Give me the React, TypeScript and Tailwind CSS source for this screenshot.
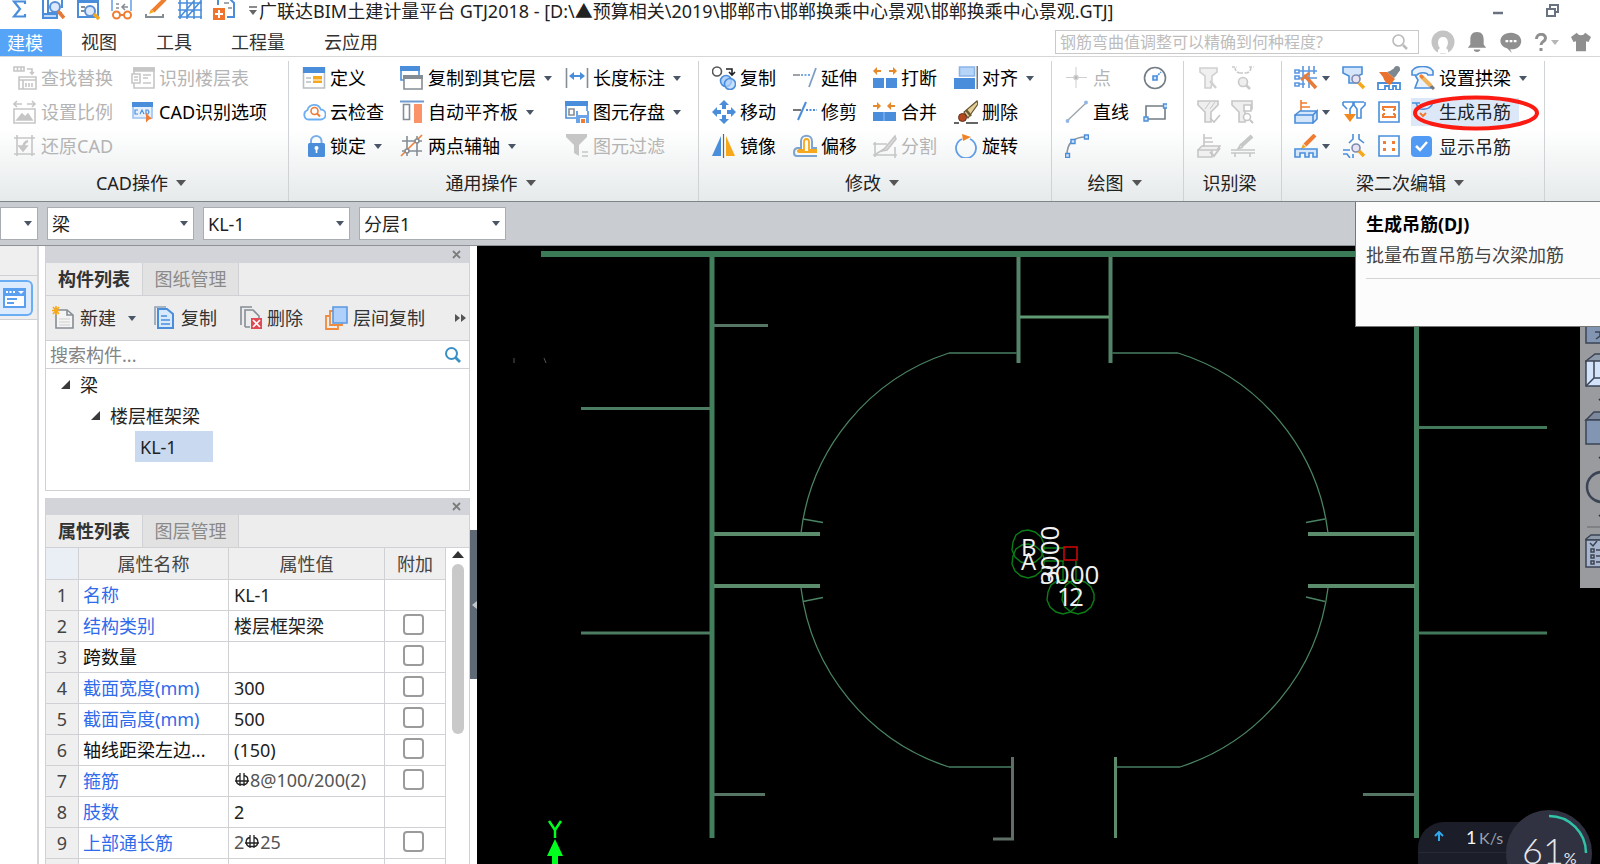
import type { ReactNode } from 'react'

const BLUE = '#4a8edb'
const SKY = '#b3d4fb'
const ORANGE = '#f07c33'
const AMBER = '#f6a81c'
const GRAY = '#858d94'
const OFF = '#c6c6c6'
const WALL = '#4a8462'

// ---------- icons ----------

function Svg({ children, className = 'h-6 w-6' }: { children: ReactNode; className?: string }) {
  return (
    <svg viewBox="0 0 24 24" fill="none" strokeWidth="1.6" className={`shrink-0 ${className}`} aria-hidden="true">
      {children}
    </svg>
  )
}

function Caret({ className = 'text-gray-600' }: { className?: string }) {
  return (
    <svg viewBox="0 0 8 5" className={`h-[5px] w-2 shrink-0 ${className}`} aria-hidden="true">
      <path d="M0 0h8L4 5z" fill="currentColor" />
    </svg>
  )
}

const icons: Record<string, ReactNode> = {
  findReplace: (
    <g stroke={OFF}>
      <path d="M1 1h10v4H1zM4.500 1v4M8 1v4M14 3h5v5M17 6l2 2 2-2M6 11h17v12H6zM6 14h17M10 14v9M13 17v4M16 17v4M19 17v4" />
    </g>
  ),
  scale: (
    <g stroke={OFF}>
      <path d="M1 4h8M4 1L1 4l3 3M14 4h8M19 1l3 3-3 3M1 9h21v14H1z" />
      <path d="M4 20l5-6 3 3 3-3 4 6z" fill={OFF} />
    </g>
  ),
  restore: (
    <g stroke={OFF}>
      <path d="M4 1v21M1 4h21M1 20h21M19 1v21" />
      <path d="M15 7c-4 1-5 4-5 9" strokeWidth="2.500" />
      <path d="M6 12l4 5 4-5z" fill={OFF} />
    </g>
  ),
  floorTable: (
    <g stroke={OFF}>
      <path d="M3 2h20v20H3z" />
      <path d="M3 2h20v3H3z" fill={OFF} />
      <path d="M1 8h8v9H1z" fill="#fff" />
      <path d="M3 11h4M3 14h4M12 9h8M12 12h5M12 17h8" />
    </g>
  ),
  cadOption: (
    <g>
      <path d="M2 3h19v15H2z" fill="#e6f0fc" stroke="#9cc2f0" />
      <path d="M1 2h21v5H1z" fill={BLUE} />
      <path d="M7 10H4v4h3M9 14l2-4 2 4M15 10v4h2l1-2-1-2z" stroke={BLUE} strokeWidth="1.200" />
      <path d="M15 13l6 6-3 .5-3 3z" fill={ORANGE} />
    </g>
  ),
  define: (
    <g>
      <path d="M1.500 2h21v20h-21z" fill="#fff" stroke="#b9bec3" />
      <path d="M1 1h22v6H1z" fill={BLUE} />
      <path d="M4 12h5M4 16h5" stroke="#b9bec3" />
      <path d="M11 10h9v7h-9z" fill={AMBER} />
      <path d="M11 14h9" stroke="#fff" strokeWidth="1" />
    </g>
  ),
  cloud: (
    <g>
      <path d="M6 19.500a5 5 0 0 1-.5-9.500 7 7 0 0 1 13.300-.5A5 5 0 0 1 18.500 19.500z" stroke="#6daef2" strokeWidth="1.800" />
      <circle cx="12.500" cy="11" r="3.500" stroke={ORANGE} />
      <path d="M15 13.500l3 3" stroke={ORANGE} strokeWidth="2" />
    </g>
  ),
  lock: (
    <g>
      <path d="M9 11V6.500a5.300 5.300 0 0 1 10.500 0V11" stroke="#7aaeea" strokeWidth="2" />
      <rect x="6" y="9" width="17" height="14" rx="1.500" fill={BLUE} />
      <circle cx="14.500" cy="14" r="2" fill="#fff" />
      <path d="M14.500 14v5" stroke="#fff" />
    </g>
  ),
  copyFloor: (
    <g>
      <path d="M1 1h18v13H1z" fill="#fff" stroke={BLUE} />
      <path d="M0 0h20v5H0z" fill={BLUE} />
      <path d="M4 10h18v13H4z" fill="#fff" stroke={GRAY} />
      <path d="M3 9h20v4H3z" fill={GRAY} />
    </g>
  ),
  alignSlab: (
    <g>
      <path d="M0 1.500h24" stroke="#6f9bd1" strokeWidth="2" />
      <path d="M3.500 4.500h6v15h-6z" stroke={GRAY} />
      <path d="M14 4h8v19h-8z" fill="#fa9468" />
    </g>
  ),
  axis: (
    <g stroke={GRAY}>
      <path d="M7 2v20M17 2v20M2 7h20M2 17h20" />
      <path d="M1 22L22 1" stroke={ORANGE} />
      <circle cx="17" cy="7" r="2" fill="#fff" />
      <circle cx="7" cy="17" r="2" fill="#fff" />
    </g>
  ),
  dimension: (
    <g>
      <path d="M1.500 2v20M22.500 2v20" stroke={GRAY} />
      <path d="M5 10h14" stroke={BLUE} strokeWidth="2" />
      <path d="M4 10l5-4v8zM20 10l-5-4v8z" fill={BLUE} />
    </g>
  ),
  saveElement: (
    <g>
      <path d="M1 2h21v16H1z" fill="#fff" stroke={BLUE} />
      <path d="M0 1h23v5H0z" fill={BLUE} />
      <path d="M4 9h5v6H4z" stroke={GRAY} />
      <path d="M11 11h13v12H11z" fill="#6ba5e8" />
      <path d="M13 11h9v4h-9z" fill="#fff" />
      <path d="M15 18h6v5h-6z" fill="#fff" />
      <path d="M16 19h4v4h-4z" fill={ORANGE} />
    </g>
  ),
  filter: (
    <g>
      <path d="M1 0h21v3l-8 8v11l-5-3v-8L1 3z" fill={OFF} />
      <path d="M17 18h6M17 22h6" stroke={OFF} />
    </g>
  ),
  copy: (
    <g>
      <circle cx="5" cy="5.500" r="4.500" stroke="#555" />
      <path d="M14 3h6v5M17 6l3 3 3-3" stroke="#222" />
      <circle cx="14" cy="15" r="5.500" fill={SKY} stroke={BLUE} />
      <circle cx="18" cy="18" r="5.500" fill={SKY} fillOpacity=".7" stroke={BLUE} />
    </g>
  ),
  move: (
    <g fill={BLUE}>
      <path d="M12 0l5 5h-3v4h-4V5H7zM12 24l-5-5h3v-4h4v4h3zM0 12l5-5v3h4v4H5v3zM24 12l-5 5v-3h-4v-4h4V7z" />
    </g>
  ),
  mirror: (
    <g>
      <path d="M9 2v20H0z" fill={BLUE} />
      <path d="M14 2v20h9z" fill={AMBER} />
      <path d="M11.500 0v24" stroke="#666" strokeWidth="1.200" />
    </g>
  ),
  extend: (
    <g>
      <path d="M0 9h7" stroke={GRAY} />
      <path d="M8 9h9" stroke={BLUE} strokeDasharray="2 1.500" />
      <path d="M23 2l-7 19" stroke="#7f9fc4" strokeWidth="1.800" />
    </g>
  ),
  trim: (
    <g>
      <path d="M0 10h8" stroke="#555" />
      <path d="M13 10h11" stroke={BLUE} strokeDasharray="2 1.500" strokeWidth="2" />
      <path d="M13 2L5 20" stroke={BLUE} strokeWidth="2" />
    </g>
  ),
  offset: (
    <g>
      <path d="M24 22H4c-4 0-4-7 0-8h4V7c0-7 11-7 11 0v7h5" stroke="#7da3cf" strokeWidth="2" />
      <path d="M24 18H6c-2 0-1-2 0-2h5V8c0-4 5-4 5 0v8h8" stroke={AMBER} strokeWidth="1.800" />
    </g>
  ),
  breakIt: (
    <g>
      <path d="M0 12h11v10H0zM13 12h11v10H13z" fill={BLUE} />
      <path d="M3 5h5M16 5h5" stroke="#e58a2c" strokeWidth="2" />
      <path d="M0 5l4-4v8zM24 5l-4-4v8z" fill="#e58a2c" />
    </g>
  ),
  merge: (
    <g>
      <path d="M0 12h23v9H0z" fill={BLUE} />
      <path d="M11 12v9" stroke="#76acec" />
      <path d="M0 6h5M17 6h5" stroke="#e58a2c" strokeWidth="2" />
      <path d="M8 6L4 2v8zM14 6l4-4v8z" fill="#e58a2c" />
    </g>
  ),
  split: (
    <g stroke={OFF}>
      <path d="M2 8v15M0 10h14M0 21h24M22 13v11M3 20l8-5" />
      <path d="M22 2L12 14l-3 3 5-1 9-11z" fill="#ddd" />
    </g>
  ),
  align: (
    <g>
      <path d="M5.500 1h15v9h-15z" fill="#b6d4f7" stroke="#8ab4e8" />
      <path d="M0 12h21v11H0z" fill={BLUE} />
      <path d="M23.200 0v23" stroke="#555" strokeWidth="1.200" />
    </g>
  ),
  erase: (
    <g>
      <path d="M23 1L10 12l4 6L24 4z" fill="#e6cf94" stroke="#5f5232" strokeWidth="1.200" />
      <path d="M12 10l5 6" stroke="#6c5a32" strokeWidth="2.500" />
      <circle cx="8.500" cy="17.500" r="4" fill="#b6481f" stroke="#5f3222" strokeWidth="1" />
      <path d="M0 23h5M12 23h12" stroke="#333" strokeWidth="1.400" />
    </g>
  ),
  rotate: (
    <g>
      <path d="M8 5a10 10 0 1 0 8 0" stroke="#5f9de4" strokeWidth="1.800" />
      <path d="M8 0l9 3-8 4z" fill="#ef8324" />
    </g>
  ),
  point: (
    <g stroke="#cfcfcf">
      <path d="M11 1v21M1 11.500h21" strokeWidth="1" />
      <circle cx="11" cy="11.500" r="2" fill="#b5b5b5" />
    </g>
  ),
  line: (
    <g>
      <path d="M2 21L21 3" stroke="#9aa2aa" strokeWidth="1.300" />
      <circle cx="2.500" cy="21" r="1.900" fill="#8fb6e6" />
      <circle cx="21" cy="2.500" r="1.900" fill="#8fb6e6" />
    </g>
  ),
  arc: (
    <g>
      <path d="M2 21C2 10 8 3 21 3" stroke="#8b949c" strokeWidth="1.500" />
      <path d="M.5 19.500h4v4h-4zM6 5.500h4v4H6zM19.500 1h4v4h-4z" fill="#cfe2fa" stroke={BLUE} strokeWidth="1.400" />
    </g>
  ),
  circle: (
    <g>
      <circle cx="12" cy="12" r="10.500" stroke="#737d86" />
      <path d="M13 11l5-5" stroke={BLUE} strokeDasharray="2 1" />
      <path d="M10 10h4v4h-4z" fill="#cfe2fa" stroke={BLUE} />
    </g>
  ),
  rect: (
    <g>
      <path d="M3 6h19v13H3z" stroke="#737d86" />
      <path d="M1 17h4v4H1zM20.500 4h4v4h-4z" fill="#cfe2fa" stroke={BLUE} strokeWidth="1.400" />
    </g>
  ),
  beamPick: (
    <g stroke="#d0d0d0">
      <path d="M3 2h17v4l-5 4v6l-1 6H8V10L3 6z" fill="#f0f0f0" />
      <path d="M13 15l6 7" strokeWidth="2.500" />
    </g>
  ),
  beamZoom: (
    <g stroke="#c9c9c9">
      <path d="M1 1h5M18 1h5M4 2c1 4 3 5 5 5M20 2c-1 4-3 5-5 5M9 7h6" strokeDasharray="3 1.500" />
      <circle cx="12" cy="16" r="4.500" fill="#efefef" />
      <path d="M15 19l4 4" strokeWidth="2.500" />
    </g>
  ),
  beamFilter: (
    <g stroke={OFF}>
      <path d="M1 1h20v4l-7 7v10H8V12L1 5z" fill="#efefef" />
      <path d="M8 9l5-7M13 9l5-7" strokeWidth="1" />
      <path d="M13 18l4 4 6-7" />
    </g>
  ),
  beamFilter2: (
    <g stroke={OFF}>
      <path d="M1 1h20v8h-7v13H8V12L1 5z" fill="#efefef" />
      <path d="M13 5h7v6h-7z" fill="#fff" />
      <circle cx="16" cy="17" r="3.500" fill="#fff" />
      <path d="M19 20l3 3" strokeWidth="2" />
    </g>
  ),
  beamOk: (
    <g stroke={OFF}>
      <path d="M7 0v13M7 4h8M7 8h9M1 16l4-4h18l-3 4zM1 16h14v7H1z" fill="#f0f0f0" />
      <path d="M13 18l4 4 6-8" strokeWidth="2" />
    </g>
  ),
  beamPen: (
    <g stroke={OFF}>
      <path d="M21 2L10 12" strokeWidth="4" />
      <path d="M10 10l-3 5 5-2" />
      <path d="M0 16h24M0 19h24M4 19v4M19 19v4" />
    </g>
  ),
  gridPaint: (
    <g stroke="#5a97e2">
      <path d="M1 4h4v3H1zM1 10h4v3H1zM1 17h4v3H1zM9 0v22M15 0v22M20 0v8M5 5h18M5 12h18M5 18h6" />
      <path d="M12 11l10 11" stroke="#e77b3a" strokeWidth="3.500" />
      <path d="M7 14l8-7M10 9l5 5" stroke="#e77b3a" strokeWidth="2.500" />
    </g>
  ),
  inPlace: (
    <g>
      <path d="M7 0v12M7 3h6M7 7h9" stroke={ORANGE} />
      <path d="M1 15l5-4h17l-4 4zM1 15h18v8H1zM19 15l4-4v8l-4 4z" fill="#d5e6fb" stroke={BLUE} />
    </g>
  ),
  sketch: (
    <g>
      <path d="M21 1L11 11" stroke={ORANGE} strokeWidth="4" />
      <path d="M9 10l-2 5 5-2z" fill={AMBER} />
      <path d="M1 15h22v8h-4v-4h-4v4h-4v-4H6v4H1z" fill="#d5e6fb" stroke={BLUE} />
    </g>
  ),
  spanView: (
    <g>
      <path d="M1 1h19v7l-4 2v7H7v-7L1 7z" fill="#d5e6fb" stroke={BLUE} />
      <circle cx="14" cy="13" r="4" fill="#e7e3f3" stroke="#7d8bb0" />
      <path d="M17 17l5 5" stroke={AMBER} strokeWidth="3.500" />
    </g>
  ),
  spanDown: (
    <g>
      <path d="M1 2h10v3l-3 4v6M22 2H12v3l3 4v9h4V9l4-4V2M1 2v3l4 4" stroke={BLUE} />
      <path d="M2 14h12l-6 8z" fill="#f28a1d" />
    </g>
  ),
  spanCross: (
    <g stroke={BLUE}>
      <path d="M11 0v5l-4 4M17 0v5l5 4M1 16h7M1 20h4l3 4M11 20v4" />
      <circle cx="14" cy="14" r="4" fill="#e7e3f3" stroke="#7d8bb0" />
      <path d="M17 17l5 5" stroke={AMBER} strokeWidth="3.500" />
    </g>
  ),
  brush: (
    <g>
      <path d="M1 24v-7h22v7h-4v-4h-3v4h-4v-4H8v4z" fill="#fff" stroke={BLUE} strokeWidth="1.800" />
      <path d="M19 1l4 3-4 6-2 2-7-6 3-1z" fill="#7d8790" />
      <circle cx="20" cy="3" r="3" fill="#7d8790" />
      <path d="M2 6l8 0 8 7-5 6c-3-1-6-4-7-8z" fill="#e9722e" />
    </g>
  ),
  stirrup: (
    <g>
      <path d="M2 2h20v20H2z" stroke={BLUE} />
      <path d="M6 10V7h12v3M6 14v3h12v-3M8 10h-2M18 10h-2M8 14h-2M18 14h-2" stroke="#ef7d35" strokeWidth="2" />
    </g>
  ),
  dots: (
    <g>
      <path d="M2 2h20v20H2z" fill="#fff" stroke={BLUE} />
      <path d="M6 7h3v3H6zM15 7h3v3h-3zM6 14h3v3H6zM15 14h3v3h-3z" fill="#ef7d35" />
    </g>
  ),
  archBeam: (
    <g>
      <path d="M1 5c4-6 17-6 21 0v4h-5c-1-3-9-3-11 0H1zM4 9l3 5-3 8h16l-3-6" fill="#eaf2fd" stroke={BLUE} />
      <path d="M10 10l10 10" stroke="#f0b45e" strokeWidth="4" />
      <path d="M9 9l3 3" stroke="#ef7d35" strokeWidth="3" />
      <path d="M20 20l3 3" stroke="#777" strokeWidth="3" />
    </g>
  ),
  hanger: (
    <g stroke={BLUE}>
      <path d="M1 3h8M18 3h6M5 3c2 6 4 7 9 6 4 0 6-2 8-6" />
      <path d="M9 13l3 3 3-3" stroke={ORANGE} strokeWidth="2" />
    </g>
  ),
}

// ---------- ribbon ----------

interface Tool {
  icon: keyof typeof icons
  name: string
  text?: string
  caret?: boolean
  disabled?: boolean
}

interface Column {
  width: string
  tools: Tool[]
}

interface Group {
  label: string
  caret: boolean
  width: string
  columns: Column[]
}

const t = (icon: string, name: string, opts: Partial<Tool> = {}): Tool => ({ icon, name, text: name, ...opts })
const only = (icon: string, name: string, opts: Partial<Tool> = {}): Tool => ({ icon, name, ...opts })

const groups: Group[] = [
  {
    label: 'CAD操作',
    caret: true,
    width: 'w-[289px]',
    columns: [
      {
        width: 'w-[118px]',
        tools: [
          t('findReplace', '查找替换', { disabled: true }),
          t('scale', '设置比例', { disabled: true }),
          t('restore', '还原CAD', { disabled: true }),
        ],
      },
      { width: 'w-[140px]', tools: [t('floorTable', '识别楼层表', { disabled: true }), t('cadOption', 'CAD识别选项')] },
    ],
  },
  {
    label: '通用操作',
    caret: true,
    width: 'w-[410px]',
    columns: [
      { width: 'w-[98px]', tools: [t('define', '定义'), t('cloud', '云检查'), t('lock', '锁定', { caret: true })] },
      {
        width: 'w-[165px]',
        tools: [
          t('copyFloor', '复制到其它层', { caret: true }),
          t('alignSlab', '自动平齐板', { caret: true }),
          t('axis', '两点辅轴', { caret: true }),
        ],
      },
      {
        width: 'w-[118px]',
        tools: [
          t('dimension', '长度标注', { caret: true }),
          t('saveElement', '图元存盘', { caret: true }),
          t('filter', '图元过滤', { disabled: true }),
        ],
      },
    ],
  },
  {
    label: '修改',
    caret: true,
    width: 'w-[353px]',
    columns: [
      { width: 'w-[81px]', tools: [t('copy', '复制'), t('move', '移动'), t('mirror', '镜像')] },
      { width: 'w-[80px]', tools: [t('extend', '延伸'), t('trim', '修剪'), t('offset', '偏移')] },
      { width: 'w-[81px]', tools: [t('breakIt', '打断'), t('merge', '合并'), t('split', '分割', { disabled: true })] },
      { width: 'w-[90px]', tools: [t('align', '对齐', { caret: true }), t('erase', '删除'), t('rotate', '旋转')] },
    ],
  },
  {
    label: '绘图',
    caret: true,
    width: 'w-[132px]',
    columns: [
      { width: 'w-[78px]', tools: [t('point', '点', { disabled: true }), t('line', '直线'), only('arc', '弧线')] },
      { width: 'w-6', tools: [only('circle', '圆'), only('rect', '矩形')] },
    ],
  },
  {
    label: '识别梁',
    caret: false,
    width: 'w-[98px]',
    columns: [
      { width: 'w-[34px]', tools: [only('beamPick', '识别梁'), only('beamFilter', '校核梁'), only('beamOk', '原位标注校核')] },
      { width: 'w-6', tools: [only('beamZoom', '查改支座'), only('beamFilter2', '编辑支座'), only('beamPen', '识别原位标注')] },
    ],
  },
]

function ToolButton({ tool }: { tool: Tool }) {
  return (
    <button
      type="button"
      aria-label={tool.name}
      disabled={tool.disabled}
      className="flex h-[34px] items-center gap-1 whitespace-nowrap text-black disabled:text-[#b4b4b4]"
    >
      <Svg>{icons[tool.icon]}</Svg>
      {tool.text && <span>{tool.text}</span>}
      {tool.caret && <Caret className={tool.text ? 'ml-1 text-gray-600' : 'text-gray-600'} />}
    </button>
  )
}

function GroupLabel({ label, caret }: { label: string; caret: boolean }) {
  return (
    <div className="flex h-9 items-center justify-center gap-2 pr-1.5">
      <span>{label}</span>
      {caret && (
        <svg viewBox="0 0 10 6" className="h-1.5 w-2.5" aria-hidden="true">
          <path d="M0 0h10L5 6z" fill="#555" />
        </svg>
      )}
    </div>
  )
}

function RibbonGroup({ group }: { group: Group }) {
  return (
    <div className={`shrink-0 border-r border-[#cfd3d6] ${group.width}`}>
      <div className="flex h-[104px] pl-[13px]">
        {group.columns.map((col, i) => (
          <div key={i} className={`shrink-0 ${col.width}`}>
            {col.tools.map((tool) => (
              <ToolButton key={tool.name} tool={tool} />
            ))}
          </div>
        ))}
      </div>
      <GroupLabel label={group.label} caret={group.caret} />
    </div>
  )
}

function BeamEditGroup() {
  return (
    <div className="w-[263px] shrink-0 border-r border-[#cfd3d6]">
      <div className="flex h-[104px] pl-3">
        <div className="w-12">
          <ToolButton tool={only('gridPaint', '重提梁跨', { caret: true })} />
          <ToolButton tool={only('inPlace', '原位标注', { caret: true })} />
          <ToolButton tool={only('sketch', '平法表格', { caret: true })} />
        </div>
        <div className="w-[35px]">
          <ToolButton tool={only('spanView', '查看梁跨')} />
          <ToolButton tool={only('spanDown', '刷新支座尺寸')} />
          <ToolButton tool={only('spanCross', '查看交点')} />
        </div>
        <div className="w-[34px]">
          <ToolButton tool={only('brush', '应用到同名梁')} />
          <ToolButton tool={only('stirrup', '生成架立筋')} />
          <ToolButton tool={only('dots', '生成侧面筋')} />
        </div>
        <div>
          <ToolButton tool={t('archBeam', '设置拱梁', { caret: true })} />
          <div className="relative flex h-[34px] items-center">
            <button type="button" className="flex h-7 items-center gap-1 bg-[#dce8f8] pr-2 whitespace-nowrap">
              <Svg>{icons.hanger}</Svg>
              <span>生成吊筋</span>
            </button>
            <svg viewBox="0 0 128 36" className="pointer-events-none absolute top-0 left-[2px] h-9 w-32" aria-hidden="true">
              <ellipse cx="63" cy="18" rx="61" ry="15.500" fill="none" stroke="#fb1b12" strokeWidth="4" />
            </svg>
          </div>
          <label className="relative flex h-[35px] items-center gap-[7px] whitespace-nowrap">
            <input type="checkbox" defaultChecked className="h-[21px] w-[21px] appearance-none rounded-sm bg-[#529bf5]" />
            <svg viewBox="0 0 21 21" className="pointer-events-none absolute left-0 h-[21px] w-[21px]" aria-hidden="true">
              <path d="M5 10l4 4 7-8" fill="none" stroke="#fff" strokeWidth="2.500" />
            </svg>
            <span>显示吊筋</span>
          </label>
        </div>
      </div>
      <GroupLabel label="梁二次编辑" caret />
    </div>
  )
}

// ---------- title bar and menu ----------

function QuickIcon({ name, children }: { name: string; children: ReactNode }) {
  return (
    <button type="button" aria-label={name}>
      <svg viewBox="0 4 24 20" fill="none" strokeWidth="2" className="h-5 w-6" aria-hidden="true">
        {children}
      </svg>
    </button>
  )
}

function TitleBar() {
  return (
    <header className="flex h-[28px] items-start overflow-hidden pl-2">
      <div className="flex gap-2.5">
        <QuickIcon name="汇总计算">
          <path d="M17 8V5.500H6l6 7.500-6 7.500h11V18" stroke={BLUE} strokeWidth="2.200" />
        </QuickIcon>
        <QuickIcon name="查看工程量">
          <path d="M1 1h5v17H1zM6 17h14M20 2v10" stroke={BLUE} />
          <path d="M1 18h14v4H1z" fill="#bcd7f8" stroke={BLUE} />
          <circle cx="13" cy="11" r="5" fill="#dbe9fb" stroke="#5a8fd6" />
          <path d="M16 15l6 7" stroke="#e5793a" strokeWidth="3.500" />
        </QuickIcon>
        <QuickIcon name="查看计算式">
          <path d="M2 3h20v18H2z" fill="#fff" stroke={BLUE} />
          <path d="M2 4h20v3H2z" fill={BLUE} />
          <path d="M5 11h4M5 15h4" stroke={GRAY} />
          <circle cx="14" cy="15" r="5" fill="#dbe9fb" stroke="#5a8fd6" />
          <path d="M18 18l5 5" stroke={AMBER} strokeWidth="3.500" />
        </QuickIcon>
        <QuickIcon name="查看报表">
          <path d="M2 15V1h19v14" stroke="#8ab4ee" />
          <path d="M6 8h3M6 12h3M18 11h-6M15 8l-3 3 3 3" stroke={GRAY} strokeWidth="1.500" />
          <circle cx="6.500" cy="19" r="3.500" stroke={ORANGE} />
          <circle cx="17.500" cy="19" r="3.500" stroke={ORANGE} />
          <path d="M10 19h4" stroke={ORANGE} />
        </QuickIcon>
        <QuickIcon name="绘制">
          <path d="M21 3L9 15" stroke="#ef7f2e" strokeWidth="4" />
          <path d="M7 13l-2 5 5-2z" fill={AMBER} />
          <path d="M2 18v3h17v-3" stroke={GRAY} />
        </QuickIcon>
        <QuickIcon name="轴网">
          <path d="M2 2v21M9 2v21M16 2v21M23 2v21M0 7h24M0 14h24M0 21h24M9 21L23 5M2 21L16 5" stroke={BLUE} strokeWidth="1.600" />
        </QuickIcon>
        <QuickIcon name="导入">
          <path d="M6 9V1h10l6 6v14h-7" stroke={BLUE} />
          <path d="M16 12h4M12 7h5" stroke={GRAY} strokeWidth="1.500" />
          <path d="M1 12h12v12H1z" fill="#f0742c" />
          <path d="M7 14v8M3 18h8" stroke="#fff" />
        </QuickIcon>
      </div>
      <div className="flex h-[22px] items-center">
        <svg viewBox="0 0 8 10" className="mr-[2px] ml-[13px] h-2.5 w-2" aria-hidden="true">
          <path d="M0 1h8" stroke="#666" strokeWidth="1.500" />
          <path d="M0 4h8L4 9z" fill="#666" />
        </svg>
        <h1 className="whitespace-nowrap text-[#222]">
          广联达BIM土建计量平台 GTJ2018 - [D:\▲预算相关\2019\邯郸市\邯郸换乘中心景观\邯郸换乘中心景观.GTJ]
        </h1>
      </div>
      <div className="ml-auto flex h-5 items-center text-gray-500">
        <button type="button" aria-label="最小化" className="mr-[43px]">
          <svg viewBox="0 0 10 14" className="h-3.5 w-2.5" aria-hidden="true">
            <path d="M0 10h10" stroke="currentColor" strokeWidth="2.500" />
          </svg>
        </button>
        <button type="button" aria-label="还原" className="mr-10">
          <svg viewBox="0 0 14 14" fill="none" stroke="currentColor" strokeWidth="2" className="h-3.5 w-3.5" aria-hidden="true">
            <path d="M1 6h8v7H1zM4 5V2h8v7H9" />
          </svg>
        </button>
      </div>
    </header>
  )
}

function MenuBar() {
  return (
    <nav className="flex h-[29px] items-stretch border-b border-[#d4d6d8] text-[#333]">
      <a href="#model" className="mt-px flex w-[62px] items-center rounded-tr bg-[#56a4f7] pl-[7px] text-white">
        建模
      </a>
      {['视图', '工具', '工程量', '云应用'].map((name) => (
        <a key={name} href="#menu" className="flex items-center pr-5 pl-[19px] whitespace-nowrap">
          {name}
        </a>
      ))}
      <div className="ml-auto flex items-center pr-[9px] text-[#8f8f8f]">
        <div className="mr-3 flex h-6 w-[364px] items-center border border-[#c9c9c9] bg-white pr-2.5 pl-1">
          <input
            aria-label="搜索帮助"
            placeholder="钢筋弯曲值调整可以精确到何种程度?"
            className="min-w-0 flex-1 text-base leading-5 outline-none placeholder:text-[#bdbdbd]"
          />
          <svg viewBox="0 0 16 16" fill="none" stroke="#bbb" strokeWidth="1.600" className="h-4 w-4" aria-hidden="true">
            <circle cx="6.500" cy="6.500" r="5.500" />
            <path d="M11 11l4 4" strokeWidth="2.500" />
          </svg>
        </div>
        <button type="button" aria-label="账户" className="mr-3">
          <Svg>
            <circle cx="12" cy="12" r="11.500" fill="#c4c4c4" />
            <path d="M7 23v-3l2-2c-3-3-3-11 3-11s6 8 3 11l2 2v3z" fill="#fff" />
          </Svg>
        </button>
        <button type="button" aria-label="通知" className="mr-3">
          <Svg className="h-[22px] w-5">
            <path d="M12 0c-6 0-8 4-8 9v6l-3 4h22l-3-4V9c0-5-2-9-8-9zM8 21h8c0 4-8 4-8 0z" fill="currentColor" />
          </Svg>
        </button>
        <button type="button" aria-label="消息" className="mr-3">
          <Svg className="h-[22px] w-6">
            <path d="M12 2c16 1 14 19-1 18l2 4-5-5C-4 16-1 2 12 2z" fill="currentColor" />
            <path d="M6 11h3M10.500 11h3M15 11h3" stroke="#fff" strokeWidth="2.500" />
          </Svg>
        </button>
        <button type="button" aria-label="帮助" className="mr-3 flex items-center gap-1">
          <svg viewBox="0 0 12 18" fill="none" stroke="currentColor" strokeWidth="3" className="h-[18px] w-3" aria-hidden="true">
            <path d="M1.500 6C1.500 0 10.500 0 10.500 5c0 4-4.500 3-4.500 7M6 15v3" />
          </svg>
          <Caret className="text-[#b5b5b5]" />
        </button>
        <button type="button" aria-label="皮肤">
          <Svg className="h-5 w-5">
            <path d="M0 6l7-5c2 4 8 4 10 0l7 5-3 6-3-1v12H6V11l-3 1z" fill="currentColor" />
          </Svg>
        </button>
      </div>
    </nav>
  )
}

function Combo({ label, value, width }: { label: string; value: string; width: string }) {
  return (
    <div className={`relative h-[33px] shrink-0 ${width}`}>
      <select aria-label={label} defaultValue={value} className="h-full w-full appearance-none border border-[#a9adb2] bg-white pl-1">
        <option>{value}</option>
      </select>
      <span className="pointer-events-none absolute inset-y-0 right-1.5 flex items-center">
        <Caret />
      </span>
    </div>
  )
}

// ---------- docked panels ----------

function PanelHead({ active, other }: { active: string; other: string }) {
  return (
    <>
      <div className="flex h-[17px] items-center justify-end bg-[#d2d4d9] pr-2">
        <button type="button" aria-label={`关闭${active}`}>
          <svg viewBox="0 0 9 9" className="h-[9px] w-[9px]" aria-hidden="true">
            <path d="M1 1l7 7M8 1L1 8" stroke="#7c7c7c" strokeWidth="1.800" />
          </svg>
        </button>
      </div>
      <div className="flex h-[33px] border-b border-[#cfd1d5] bg-[#ededee]">
        <button type="button" className="w-24 font-bold text-[#333]">
          {active}
        </button>
        <button type="button" className="w-[97px] border-x border-[#cfd1d5] bg-[#e2e2e3] text-[#8a8a8a]">
          {other}
        </button>
      </div>
    </>
  )
}

function Twisty() {
  return (
    <svg viewBox="0 0 9 9" className="h-[9px] w-[9px]" aria-hidden="true">
      <path d="M9 0v9H0z" fill="#3a3a3a" />
    </svg>
  )
}

function ComponentPanel() {
  return (
    <section className="h-[245px] border border-t-0 border-[#cfd1d5] bg-white">
      <PanelHead active="构件列表" other="图纸管理" />
      <div className="flex h-[45px] items-center border-b border-[#cfd1d5] bg-[#ededee] pl-1.5 text-[#333]">
        <button type="button" className="mr-[17px] flex items-center gap-1">
          <Svg>
            <path d="M4 4h11l6 5v13H4z" fill="#f4f4f4" stroke={GRAY} />
            <path d="M15 4v5h6" stroke={GRAY} />
            <path d="M7 13h11M7 16h11M7 19h11" stroke="#cfcfcf" strokeWidth="1" />
            <path d="M4 0v9M0 4.500h8M1 1l6 7M7 1L1 8" stroke={AMBER} />
          </Svg>
          <span>新建</span>
          <Caret className="ml-2 text-gray-600" />
        </button>
        <button type="button" className="mr-[22px] flex items-center gap-1">
          <Svg>
            <path d="M2 19V1h11" stroke="#8ea0b3" />
            <path d="M5 3h9l6 5v14H5z" fill="#d9e9fc" stroke={BLUE} strokeWidth="2" />
            <path d="M8 10h6M8 14h9M8 18h9" stroke={BLUE} />
          </Svg>
          <span>复制</span>
        </button>
        <button type="button" className="mr-[22px] flex items-center gap-1">
          <Svg>
            <path d="M2 19V1h11M6 21V4h8l6 6v4M6 21h5" stroke={GRAY} />
            <path d="M12 12h11v11H12z" fill="#df4b55" />
            <path d="M14 14l7 7M21 14l-7 7" stroke="#fff" />
          </Svg>
          <span>删除</span>
        </button>
        <button type="button" className="flex items-center gap-1">
          <Svg>
            <path d="M5 10H1v13h12v-3M9 5H5v14h12v-2" stroke="#f08a3c" strokeWidth="1.800" />
            <path d="M8 1h14v16H8z" fill="#aed0fb" stroke="#5b98e0" />
          </Svg>
          <span>层间复制</span>
        </button>
        <button type="button" aria-label="更多" className="mr-0.5 ml-auto">
          <svg viewBox="0 0 12 8" className="h-2 w-3" aria-hidden="true">
            <path d="M0 0l5 4-5 4zM6 0l5 4-5 4z" fill="#555" />
          </svg>
        </button>
      </div>
      <div className="flex h-7 items-center border-b border-[#cfd1d5] pr-2 pl-1">
        <input aria-label="搜索构件" placeholder="搜索构件..." className="min-w-0 flex-1 outline-none placeholder:text-[#848484]" />
        <svg viewBox="0 0 16 16" fill="none" stroke="#3990c4" strokeWidth="2" className="h-4 w-4" aria-hidden="true">
          <circle cx="6.500" cy="6.500" r="5.500" />
          <path d="M10.500 10.500l4.500 4.500" strokeWidth="2.800" />
        </svg>
      </div>
      <ul className="text-[#222]">
        <li className="flex h-[31px] items-center gap-2.5 pl-[15px]">
          <Twisty />
          梁
        </li>
        <li className="flex h-[31px] items-center gap-2.5 pl-[45px]">
          <Twisty />
          楼层框架梁
        </li>
        <li className="ml-[89px] flex h-[31px] w-[78px] items-center bg-[#c9d9f0] pl-[5px]">KL-1</li>
      </ul>
    </section>
  )
}

// HRB400 bar mark, a half-open ring crossed by two strokes
function RebarMark() {
  return (
    <svg viewBox="0 0 16 16" fill="none" stroke="#222" strokeWidth="1.300" className="mb-1.5 inline h-4 w-4" role="img" aria-label="HRB400">
      <path d="M1 9h14M6 1v13M10 1v13M6 3.500c-6 1-4 9 0 9h4c4 0 6-8 0-9" />
    </svg>
  )
}

interface Prop {
  name: string
  value: ReactNode
  extra: boolean
  plain?: boolean
}

const props: Prop[] = [
  { name: '名称', value: 'KL-1', extra: false },
  { name: '结构类别', value: '楼层框架梁', extra: true },
  { name: '跨数量', value: '', extra: true, plain: true },
  { name: '截面宽度(mm)', value: '300', extra: true },
  { name: '截面高度(mm)', value: '500', extra: true },
  { name: '轴线距梁左边...', value: '(150)', extra: true, plain: true },
  { name: '箍筋', value: <span className="text-[#555]"><RebarMark />8@100/200(2)</span>, extra: true },
  { name: '肢数', value: '2', extra: false },
  { name: '上部通长筋', value: <span className="text-[#555]">2<RebarMark />25</span>, extra: true },
]

function PropertyPanel() {
  return (
    <section className="mt-[7px] flex min-h-0 flex-1 flex-col overflow-hidden border-x border-[#cfd1d5] bg-white">
      <PanelHead active="属性列表" other="图层管理" />
      <div className="flex min-h-0 flex-1">
        <table className="w-[400px] shrink-0 table-fixed border-separate border-spacing-0 self-start">
          <thead>
            <tr className="h-8 bg-[#efefef] text-[#444]">
              <th aria-label="序号" className="w-[33px] border-r border-b border-[#cfd1d5] bg-[#eaeef5]" />
              <th className="w-[150px] border-r border-b border-[#cfd1d5] font-normal">属性名称</th>
              <th className="w-[156px] border-r border-b border-[#cfd1d5] font-normal">属性值</th>
              <th className="border-r border-b border-[#cfd1d5] font-normal">附加</th>
            </tr>
          </thead>
          <tbody>
            {props.map((p, i) => (
              <tr key={p.name} className="h-[31px]">
                <td className="border-r border-b border-[#cfd1d5] bg-[#efefef] text-center text-[#444]">{i + 1}</td>
                <td className={`border-r border-b border-[#cfd1d5] pl-1 whitespace-nowrap ${p.plain ? 'text-[#111]' : 'text-[#2f6bea]'}`}>
                  {p.name}
                </td>
                <td className="border-r border-b border-[#cfd1d5] pl-[5px] whitespace-nowrap text-[#222]">{p.value}</td>
                <td className="border-r border-b border-[#cfd1d5] pr-1 pb-1 text-center">
                  {p.extra && (
                    <input
                      type="checkbox"
                      aria-label={`附加${p.name}`}
                      className="mx-auto block h-[21px] w-[21px] appearance-none rounded border-2 border-[#9b9b9b] bg-white"
                    />
                  )}
                </td>
              </tr>
            ))}
            <tr className="h-[31px]">
              <td className="border-r border-[#cfd1d5] bg-[#efefef]" />
              <td className="border-r border-[#cfd1d5]" />
              <td className="border-r border-[#cfd1d5]" />
              <td className="border-r border-[#cfd1d5]" />
            </tr>
          </tbody>
        </table>
        <div className="flex flex-1 flex-col items-center gap-1.5 pt-[3px]">
          <svg viewBox="0 0 12 7" className="h-[7px] w-3" aria-hidden="true">
            <path d="M0 7h12L6 0z" fill="#333" />
          </svg>
          <div className="h-[170px] w-3 rounded-full bg-[#c9c9c9]" />
        </div>
      </div>
    </section>
  )
}

// ---------- drawing area ----------

const drawingLines: [string, number, string][] = [
  ['M541 254H1700', 6, '#3a7a57'],
  ['M712 257V838M1416.500 257V838', 5, '#427f5d'],
  ['M1018.500 257V363M1110.500 257V363', 4, '#548369'],
  ['M1020 317H1109', 3, '#5f9a73'],
  ['M714 534H820M714 586H820M1308 534H1415M1308 586H1415', 4, '#5b8d6d'],
  ['M714 325.500H768M714 794.500H765M1363 794.500H1415', 3, '#567565'],
  ['M581 408.500H710M581 633H710', 3, '#4c7d62'],
  ['M1418 427.500H1547M1418 633H1547', 3, '#43795b'],
  ['M1012.500 757V840M993 839H1014', 3, '#5f6f66'],
  ['M1115.500 757V838', 3, '#5d8c6c'],
  ['M949 353H1017M1112 353H1178M949 767H1011M1117 767H1180', 2, '#355f49'],
]

function Drawing() {
  return (
    <svg className="h-full w-full" role="img" aria-label="梁平面图">
      <g transform="translate(-477 -246)" fill="none">
        {drawingLines.map(([d, w, color]) => (
          <path key={d} d={d} strokeWidth={w} stroke={color} />
        ))}
        <g stroke={WALL} strokeWidth="1.300">
          <path d="M949 353A216 216 0 0 0 801 533M801 588A216 216 0 0 0 949 767" />
          <path d="M1178 353A216 216 0 0 1 1328 533M1328 588A216 216 0 0 1 1180 767" />
          <path d="M803 519l20 3.500M803 601.500l20-4M1306 522.500l19-3.500M1306 597l19 4.500" />
        </g>
        <path d="M514 358v5M544 358l2 5" stroke="#555" />
        <g stroke="#0b7d16" strokeWidth="1.400">
          <path d="M1022 531l6-1 7 2 6 5 3 7v6l-3 7-6 5-7 2-7-2-6-5-3-7 1-8 3-7z" />
          <path d="M1022 545l6-1 7 2 6 5 3 7v6l-3 7-6 5-7 2-7-2-6-5-3-7 1-8 3-7z" />
          <path d="M1057 581l6-1 7 2 6 5 3 7v6l-3 7-6 5-7 2-7-2-6-5-3-7 1-8 3-7z" />
          <path d="M1072 581l6-1 7 2 6 5 3 7v6l-3 7-6 5-7 2-7-2-6-5-3-7 1-8 3-7z" />
          <path d="M1044 548h20M1044 561h20M1063 561v19M1076 561v19" />
        </g>
        <rect x="1064" y="547" width="13" height="13" stroke="#d00808" strokeWidth="1.500" />
        <g fill="#f2f2f2" fontSize="26" fontFamily="'Open Sans', sans-serif">
          <text x="1021" y="556" fontSize="24">B</text>
          <text x="1021" y="570" fontSize="24">A</text>
          <text x="1040" y="584">3000</text>
          <text transform="translate(1059 585) rotate(-90)">3000</text>
          <text x="1057" y="606">1</text>
          <text x="1069" y="606">2</text>
        </g>
        <path d="M549 821l6 9 6-9M555 829v9" stroke="#00ff1e" strokeWidth="2.500" />
        <path d="M555 839l8 17h-5v12h-6v-12h-5z" fill="#00ff1e" />
      </g>
    </svg>
  )
}

function ViewBar() {
  return (
    <div className="absolute top-[81px] right-0 h-[261px] w-5 overflow-hidden bg-[#9a9b9e]">
      <svg viewBox="0 0 20 261" fill="none" stroke="#3b4454" strokeWidth="1.500" className="h-full w-full" aria-hidden="true">
        <path d="M6 0v16h16V0" fill="#8295b3" />
        <path d="M15 5h5v4l-4 3" />
        <path d="M6 34l9-7h12v8H6z" fill="#8e99a9" />
        <path d="M6 34h20v25H6z" fill="#d3e4fa" />
        <path d="M14 34v17h8M6 59l8-8" />
        <path d="M6 93l8-8h12v8z" fill="#7c899d" />
        <path d="M6 93h20v24H6z" fill="#8295b3" />
        <circle cx="22" cy="160" r="15" strokeWidth="2.500" />
        <path d="M7 200h13" stroke="#77797d" />
        <path d="M6 212l5-4h12v5H6z" fill="#8e99a9" />
        <path d="M6 213h20v27H6z" fill="#a8b6cd" />
        <path d="M10 216l3 3 4-5M11 222h3v3h-3zM11 228h3v3h-3zM11 234h3v3h-3zM16 223h4M16 229h4M16 235h4" />
        <path d="M19 72l3 3M19 130l3 3M19 188l3 3" stroke="#333" />
      </svg>
    </div>
  )
}

function NetMeter() {
  return (
    <div className="absolute right-0 bottom-0 h-[54px] w-[182px] overflow-hidden">
      <div className="absolute top-3 left-0 flex h-16 w-32 rounded-l-[26px] bg-[#1b1d28] pt-[3px] pl-4">
        <svg viewBox="0 0 10 10" className="mt-1.5 h-2.5 w-2.5" aria-hidden="true">
          <path d="M5 10V2M1 5l4-4 4 4" fill="none" stroke="#2fa8ee" strokeWidth="2" />
        </svg>
        <p className="ml-[22px] font-[Lato,sans-serif] text-lg leading-6 text-gray-100">
          1 <span className="-ml-[2px] text-base text-gray-400">K/s</span>
        </p>
      </div>
      <div className="absolute top-[42px] left-0 w-32 border-t border-[#262936]" />
      <div className="absolute top-0 left-[88px] h-[86px] w-[86px] rounded-full bg-[#303241]">
        <svg viewBox="0 0 86 86" fill="none" className="absolute inset-0" aria-hidden="true">
          <path d="M43 6a37 37 0 0 1 37 37" stroke="#2fc4a8" strokeWidth="2.500" />
        </svg>
        <p className="pt-5 pl-4 font-[Lato,sans-serif] text-4xl leading-10 font-light whitespace-nowrap text-gray-200">
          61<span className="text-base font-normal">%</span>
        </p>
      </div>
    </div>
  )
}

function HangerTip() {
  return (
    <div role="tooltip" className="absolute top-[202px] right-0 h-[125px] w-[245px] border-b border-l border-[#777] bg-[#fcfcfc] pt-2 pl-2.5">
      <p className="leading-7 font-bold text-black">生成吊筋(DJ)</p>
      <p className="mt-[3px] leading-7 text-[#444]">批量布置吊筋与次梁加筋</p>
      <div className="mt-[9px] border-t border-[#d5d5d5]" />
    </div>
  )
}

export default function App() {
  return (
    <div className="relative flex h-screen flex-col overflow-hidden bg-white font-['Noto_Sans','Noto_Sans_CJK_SC',sans-serif] text-[18px] leading-6 text-[#222]">
      <TitleBar />
      <MenuBar />
      <div className="flex border-b border-[#7e8589] bg-linear-to-b from-white from-50% to-[#e6eaeb] pt-1">
        {groups.map((g) => (
          <RibbonGroup key={g.label} group={g} />
        ))}
        <BeamEditGroup />
      </div>
      <div className="flex h-11 shrink-0 items-center gap-[9px] border-b border-[#8e9297] bg-[#c9ccd1]">
        <Combo label="楼层" value="" width="w-[38px]" />
        <Combo label="构件类型" value="梁" width="w-[147px]" />
        <Combo label="构件" value="KL-1" width="w-[147px]" />
        <Combo label="分层" value="分层1" width="w-[147px]" />
      </div>
      <main className="flex min-h-0 flex-1">
        <aside className="w-[39px] shrink-0 border-r-2 border-[#d3d5d9]">
          <div className="h-[30px] border-b border-[#cfd1d5] bg-[#efefef]" />
          <div className="flex h-[44px] items-center border-b border-[#cfd1d5] bg-[#efefef]">
            <button type="button" aria-label="构件工具栏" className="flex h-9 w-[33px] items-center rounded-r-md border-2 border-l-0 border-[#6badf5] bg-[#dcebfd] pl-[3px]">
              <Svg>
                <path d="M1 3h21v18H1z" fill="#fff" stroke="#5a9ff0" strokeWidth="2" />
                <path d="M0 2h23v8H0z" fill="#5a9ff0" />
                <path d="M3 6h2M6.500 6h2M10 6h2" stroke="#fff" strokeWidth="2" />
                <path d="M15 5h6l-3 3z" fill="#fff" />
                <path d="M4 13h10M4 17h7" stroke="#5a9ff0" strokeWidth="1.800" />
              </Svg>
            </button>
          </div>
        </aside>
        <div className="ml-1.5 flex w-[425px] shrink-0 flex-col">
          <ComponentPanel />
          <PropertyPanel />
        </div>
        <div className="w-[7px] shrink-0 pt-[284px]">
          <button type="button" aria-label="收起面板" className="flex h-[149px] w-full items-center justify-end bg-[#5f6975]">
            <svg viewBox="0 0 5 8" className="h-2 w-[5px]" aria-hidden="true">
              <path d="M5 0v8L0 4z" fill="#c2c6cb" />
            </svg>
          </button>
        </div>
        <div className="relative min-w-0 flex-1 overflow-hidden bg-black">
          <Drawing />
          <ViewBar />
          <NetMeter />
        </div>
      </main>
      <HangerTip />
    </div>
  )
}
